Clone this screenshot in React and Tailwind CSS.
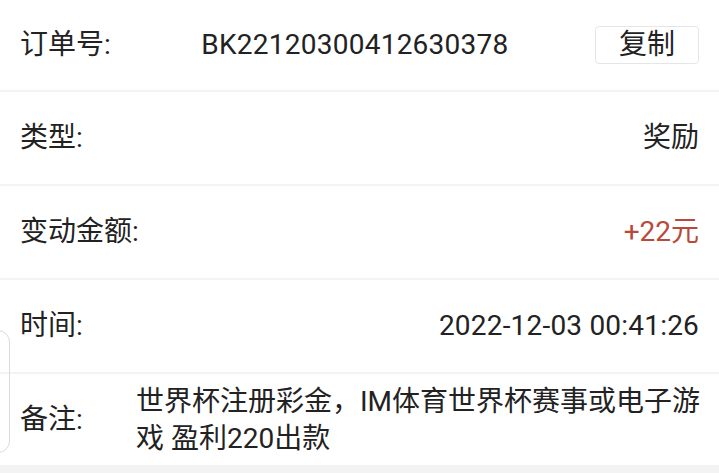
import React from "react";

const font = { fontFamily: "Roboto, 'Noto Sans CJK SC', sans-serif" };

function Row({ label, children, className = "" }) {
  return (
    <div className={`flex items-center px-5 border-b-2 border-[#f3f3f3] ${className}`}>
      <span className="shrink-0 text-[28px] text-[#222]">{label}</span>
      {children}
    </div>
  );
}

export default function App() {
  return (
    <div className="relative h-[473px] w-[719px] overflow-hidden bg-[#f3f3f3]" style={font}>
      <div className="bg-white">
        <Row label="订单号:" className="h-[92px]">
          <span className="flex-1 pl-[4px] text-center text-[28px] tracking-[0.25px] text-[#222]">BK22120300412630378</span>
          <button className="h-[38px] w-[104px] rounded-[4px] border border-[#e6e6e6] bg-white text-[28px] leading-none text-[#222]">
            复制
          </button>
        </Row>
        <Row label="类型:" className="h-[94px]">
          <span className="flex-1 text-right text-[28px] text-[#222]">奖励</span>
        </Row>
        <Row label="变动金额:" className="h-[94px]">
          <span className="flex-1 text-right text-[28px] text-[#b84a39]">+22元</span>
        </Row>
        <Row label="时间:" className="h-[94px]">
          <span className="flex-1 text-right text-[28px] tracking-[0.2px] text-[#222]">2022-12-03 00:41:26</span>
        </Row>
        <div className="flex h-[91px] items-center pl-5 pr-[18px]">
          <span className="w-[116px] shrink-0 text-[28px] text-[#222]">备注:</span>
          <p className="flex-1 text-[28px] leading-[37px] text-[#222]">
            世界杯注册彩金，IM体育世界杯赛事或电子游戏 盈利220出款
          </p>
        </div>
      </div>
      {/* floating handle at left edge */}
      <div className="absolute left-[-20px] top-[330px] h-[123px] w-[30px] rounded-[12px] border-[1.5px] border-[#dadada]" />
    </div>
  );
}
